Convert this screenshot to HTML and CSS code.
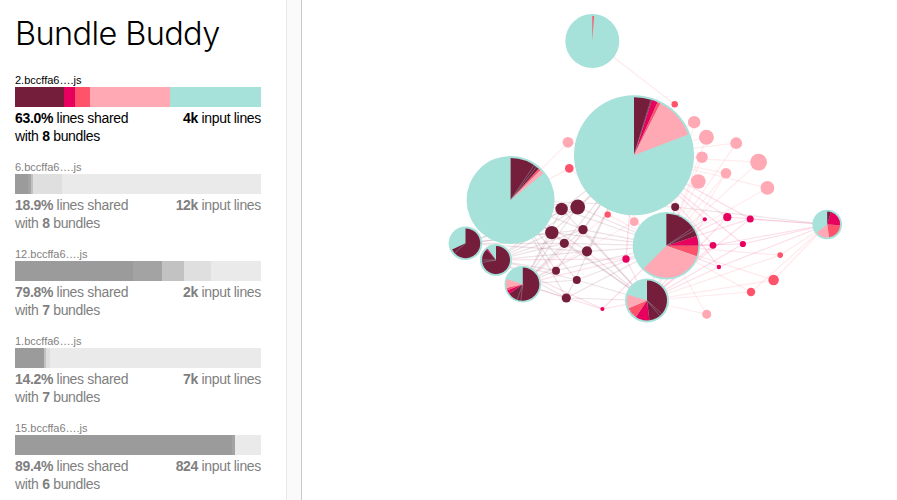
FILE: index.html
```html
<!DOCTYPE html>
<html lang="en">
<head>
<meta charset="utf-8">
<title>Bundle Buddy</title>
<link rel="stylesheet" href="styles.css">
</head>
<body>
<div class="app">
  <aside class="sidebar">
    <h1 class="title">Bundle Buddy</h1>
    <div class="list" id="list"></div>
  </aside>
  <div class="gutter"></div>
  <main class="graph"><svg id="graph" viewBox="302 0 595 500" width="595" height="500"></svg></main>
</div>
<script src="app.js"></script>
</body>
</html>
```
FILE: styles.css
```css
* { box-sizing: border-box; }
body {
  margin: 0;
  background: #fff;
  color: #000;
  font-family: "Liberation Sans", Arial, sans-serif;
}
.app { display: flex; width: 897px; height: 500px; overflow: hidden; }
.sidebar { flex: 0 0 286px; padding: 0 25px 0 15px; }
.title {
  margin: 0;
  height: 73px;
  padding-top: 13px;
  font-family: Inter, sans-serif;
  font-size: 32.5px;
  font-weight: 300;
  line-height: 42px;
  letter-spacing: -0.62px;
  white-space: nowrap;
}
.bundle { height: 87px; color: #7f7f7f; }
.bundle.selected { color: #000; }
.name { height: 14px; font-size: 11px; line-height: 15px; white-space: nowrap; }
.bar { display: flex; height: 20px; }
.seg { flex: none; }
.stats {
  display: flex;
  justify-content: space-between;
  padding-top: 2px;
  font-size: 14px;
  line-height: 18px;
  letter-spacing: -0.33px;
  white-space: nowrap;
}
.maroon { background: #751e3c; fill: #751e3c; }
.rose { background: #e8005e; fill: #e8005e; }
.coral { background: #ff526b; fill: #ff526b; }
.pink { background: #ffa9b5; fill: #ffa9b5; }
.teal { background: #a6e1da; fill: #a6e1da; }
.g1 { background: #9b9b9b; }
.g2 { background: #a3a3a3; }
.g3 { background: #c2c2c2; }
.g4 { background: #dfdfdf; }
.g5 { background: #eaeaea; }
.gutter {
  flex: 0 0 16px;
  background: #fafafa;
  border-left: 1px solid #e8e8e8;
  border-right: 1px solid #c9c9c9;
}
.graph { flex: 1; }
.graph svg { display: block; }
.link { stroke-width: 1.2; stroke-opacity: 0.13; }
.link.maroon { stroke: #751e3c; }
.link.rose { stroke: #e8005e; }
.link.coral { stroke: #ff526b; }
.link.pink { stroke: #ffa9b5; stroke-opacity: 0.22; }
.divider { stroke: #a6e1da; stroke-width: 0.6; stroke-opacity: 0.5; }
```
FILE: app.js
```js
const bundles = [
  ['2.bccffa6….js', '63.0%', 8, '4k', [['maroon', 49], ['rose', 11], ['coral', 15], ['pink', 80], ['teal', 91]]],
  ['6.bccffa6….js', '18.9%', 8, '12k', [['g1', 13], ['g2', 3], ['g3', 2], ['g4', 29], ['g5', 199]]],
  ['12.bccffa6….js', '79.8%', 7, '2k', [['g1', 118], ['g2', 29], ['g3', 22], ['g4', 27], ['g5', 50]]],
  ['1.bccffa6….js', '14.2%', 7, '7k', [['g1', 29], ['g3', 2], ['g4', 4], ['g5', 211]]],
  ['15.bccffa6….js', '89.4%', 6, '824', [['g1', 217], ['g2', 3], ['g5', 26]]]
];
document.getElementById('list').innerHTML = bundles.map(([name, pct, n, lines, segs], i) => `
  <div class="bundle${i ? '' : ' selected'}">
    <div class="name">${name}</div>
    <div class="bar">${segs.map(([c, w]) => `<div class="seg ${c}" style="width:${w}px"></div>`).join('')}</div>
    <div class="stats"><div><b>${pct}</b> lines shared<br>with <b>${n}</b> bundles</div><div><b>${lines}</b> input lines</div></div>
  </div>`).join('');

// x, y, outer radius, pie radius, [class, end angle] slices, divider angles
const pies = {
  A: [592.3, 41, 27, 25, [['coral', 4]], []],
  B: [634, 155.2, 60, 58, [['maroon', 18], ['rose', 24], ['coral', 27], ['pink', 69]], [17]],
  C: [510.6, 200, 44, 42, [['maroon', 42], ['coral', 45], ['pink', 51]], [34, 38]],
  D: [666.4, 245.8, 33.7, 32, [['maroon', 72], ['rose', 90], ['coral', 109], ['pink', 225]], [56, 61]],
  E: [647, 300.5, 22, 20, [['maroon', 173], ['rose', 214], ['coral', 247], ['pink', 287]], [132, 140]],
  F: [465.5, 243.3, 16.8, 14.8, [['maroon', 245]], [228]],
  G: [496, 260, 16, 14, [['maroon', 318], ['rose', 323]], [260, 270]],
  H: [522.8, 284.2, 18.3, 16.6, [['maroon', 235], ['rose', 249], ['coral', 257], ['pink', 288]], [187, 200]],
  I: [827.2, 224.5, 14.8, 13, [['maroon', 17], ['rose', 93], ['coral', 172], ['pink', 232]], []]
};

// class, x, y, radius, connected pies
const dots = [
  ['maroon', 561.6, 209, 6.2, 'BCDFGHE'],
  ['maroon', 577.7, 207, 7.4, 'BCDFGH'],
  ['maroon', 551.8, 232.6, 6.7, 'BCDFGHE'],
  ['maroon', 583, 229.6, 4.7, 'BCDFGHE'],
  ['maroon', 564.3, 243.3, 4.6, 'BCDFGHE'],
  ['maroon', 587, 251.3, 5.1, 'BCDFGHE'],
  ['maroon', 556, 270.7, 4, 'BCDGH'],
  ['maroon', 576.8, 280, 4, 'CDEGH'],
  ['maroon', 566.3, 298, 4.6, 'CDEGHB'],
  ['maroon', 675.2, 207, 4, 'BDCEI'],
  ['rose', 626, 259, 3.7, 'BDEGH'],
  ['rose', 602.4, 309, 2.1, 'EHDG'],
  ['rose', 704.8, 219.3, 2.1, 'BDE'],
  ['rose', 727.3, 217.2, 4.1, 'BDEI'],
  ['rose', 750.2, 218.9, 3.5, 'BDEI'],
  ['rose', 713, 245.3, 3.4, 'BDEI'],
  ['rose', 742.9, 244, 3.1, 'BDEI'],
  ['rose', 718.9, 267, 2.2, 'BDEI'],
  ['coral', 607.7, 214.6, 3.2, 'BDH'],
  ['coral', 569.3, 168.4, 4.3, 'BCD'],
  ['coral', 674.7, 104.3, 3.2, 'AB'],
  ['coral', 780.2, 255.1, 2.8, 'DEI'],
  ['coral', 773.6, 280, 5.3, 'DEI'],
  ['coral', 751, 292, 4.2, 'DEI'],
  ['pink', 568, 142.3, 5.4, 'BC'],
  ['pink', 634.2, 221.7, 4.4, 'BDH'],
  ['pink', 694.2, 122.2, 6.2, 'BD'],
  ['pink', 706.4, 137.3, 7.5, 'BD'],
  ['pink', 736.2, 143.2, 5.9, 'BD'],
  ['pink', 702, 157.2, 5.8, 'BD'],
  ['pink', 758.6, 162.2, 8.4, 'BD'],
  ['pink', 726, 173.2, 5.3, 'BDE'],
  ['pink', 698.3, 181.5, 7.3, 'BD'],
  ['pink', 767.4, 187.9, 6.9, 'BD'],
  ['pink', 706.7, 314.3, 4.5, 'DE']
];

const point = (x, y, r, deg) => {
  const a = deg * Math.PI / 180;
  return `${x + r * Math.sin(a)} ${y - r * Math.cos(a)}`;
};
let svg = '';
for (const [c, x, y, , links] of dots) {
  for (const k of links) svg += `<line class="link ${c}" x1="${x}" y1="${y}" x2="${pies[k][0]}" y2="${pies[k][1]}"/>`;
}
for (const [c, x, y, r] of dots) svg += `<circle class="${c}" cx="${x}" cy="${y}" r="${r}"/>`;
for (const k of 'ABCDEFGHI') {
  const [x, y, r, pr, slices, dividers] = pies[k];
  svg += `<circle class="teal" cx="${x}" cy="${y}" r="${r}"/>`;
  let start = 0;
  for (const [c, end] of slices) {
    svg += `<path class="${c}" d="M${x} ${y}L${point(x, y, pr, start)}A${pr} ${pr} 0 ${end - start > 180 ? 1 : 0} 1 ${point(x, y, pr, end)}Z"/>`;
    start = end;
  }
  for (const d of dividers) svg += `<path class="divider" d="M${x} ${y}L${point(x, y, pr, d)}"/>`;
}
document.getElementById('graph').innerHTML = svg;
```
